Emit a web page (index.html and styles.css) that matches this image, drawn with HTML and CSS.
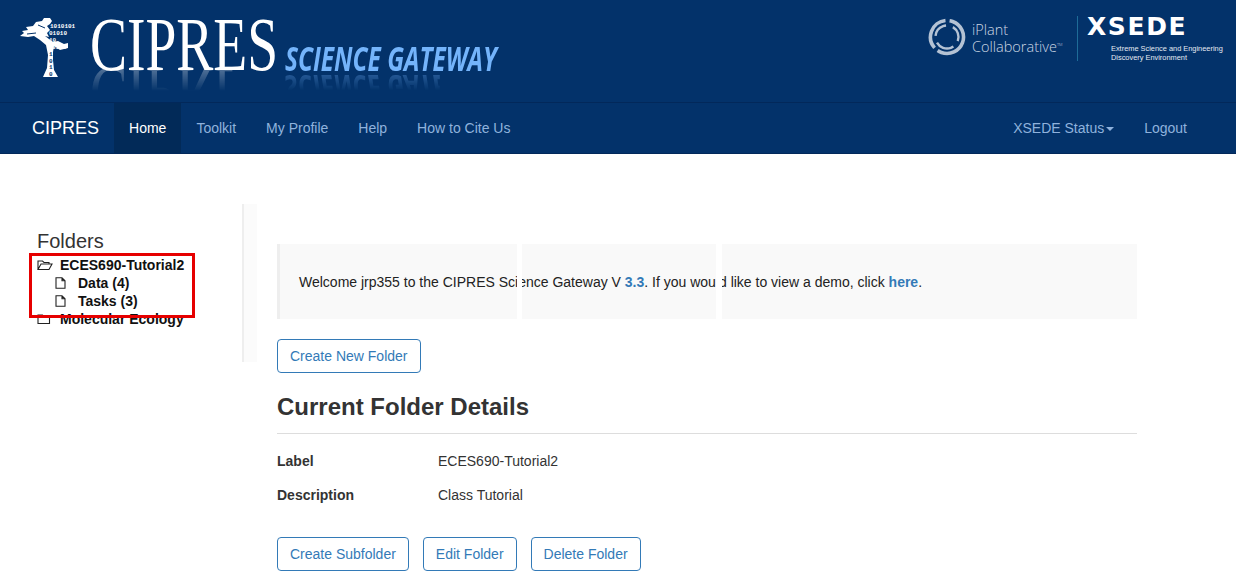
FILE: index.html
```html
<!DOCTYPE html>
<html lang="en">

<head>
  <meta charset="UTF-8">
  <title>CIPRES Science Gateway</title>
  <link rel="stylesheet" href="styles.css">
</head>

<body>

  <header class="banner">
    <div class="brand-logo">
      <svg class="tree" viewBox="18 16 62 64" width="62" height="64">
        <path fill="#fff" d="M20 36 L24 33 L22 31 L28 30 L26 27 L33 26 L36 22 L42 21 L44 18 L50 18 L52 21 L50 24 L47 26 L50 30 L47 33 L49 37 L45 36 L53 42 L58 41 L64 44 L68 43 L68 48 L60 50 L54 46 L53 52 L53 60 L54 70 L58 77 L43 77 L47 68 L48 55 L46 45 L40 40 L34 36 L28 37 Z" />
        <path stroke="#03326a" stroke-width="1" fill="none" d="M27 34 L36 33 M38 25 L45 28" />
        <g class="tree-bits">
          <text x="50" y="28">1010101</text>
          <text x="49" y="35">01010</text>
          <text x="49" y="42">10</text>
          <text x="52" y="49">0101</text>
        </g>
        <g class="tree-bits tree-bits-dark">
          <text x="49" y="56">1</text>
          <text x="49" y="63">0</text>
          <text x="49" y="69">1</text>
          <text x="49" y="76">0</text>
        </g>
      </svg>
      <span class="logo-word">CIPRES</span>
      <span class="logo-sub">SCIENCE GATEWAY</span>
    </div>

    <div class="partners">
      <svg class="iplant-mark" viewBox="0 0 40 40" width="40" height="40">
        <g fill="none" stroke="#b4c2d4">
          <circle cx="20" cy="20" r="16.5" stroke-width="3.6" stroke-dasharray="30 4 36 4" transform="rotate(20 20 20)" />
          <circle cx="20" cy="20" r="11.5" stroke-width="2.4" stroke-dasharray="16 7 16 7 16 7" transform="rotate(70 20 20)" />
        </g>
      </svg>
      <div class="iplant-name">iPlant<br>Collaborative<sup>TM</sup></div>
      <div class="partner-line"></div>
      <div class="xsede">
        <div class="xsede-name">XSEDE</div>
        <div class="xsede-sub">Extreme Science and Engineering<br>Discovery Environment</div>
      </div>
    </div>
  </header>

  <nav class="navbar">
    <a class="nav-brand" href="#">CIPRES</a>
    <a class="nav-link active" href="#">Home</a>
    <a class="nav-link" href="#">Toolkit</a>
    <a class="nav-link" href="#">My Profile</a>
    <a class="nav-link" href="#">Help</a>
    <a class="nav-link" href="#">How to Cite Us</a>
    <div class="nav-right">
      <a class="nav-link" href="#">XSEDE Status<span class="caret"></span></a>
      <a class="nav-link" href="#">Logout</a>
    </div>
  </nav>

  <div class="content">
    <aside class="sidebar">
      <h3>Folders</h3>
      <ul class="tree-list">
        <li>
          <svg class="icon" viewBox="0 0 16 12" width="16" height="12">
            <path d="M1 10.5 V2 H5.5 L7 3.5 H12 V5 M1 10.5 L4 5 H15 L12 10.5 Z" />
          </svg>
          ECES690-Tutorial2
        </li>
        <li class="child">
          <svg class="icon" viewBox="0 0 11 12" width="11" height="12">
            <path d="M1 .8 H7 L10 3.8 V11.2 H1 Z M7 .8 V3.8 H10" />
          </svg>
          Data (4)
        </li>
        <li class="child">
          <svg class="icon" viewBox="0 0 11 12" width="11" height="12">
            <path d="M1 .8 H7 L10 3.8 V11.2 H1 Z M7 .8 V3.8 H10" />
          </svg>
          Tasks (3)
        </li>
        <li>
          <svg class="icon" viewBox="0 0 16 12" width="16" height="12">
            <path d="M1 10.5 V2 H5.5 L7 3.5 H12.5 V10.5 Z" />
          </svg>
          Molecular Ecology
        </li>
      </ul>
      <div class="highlight"></div>
    </aside>

    <div class="rule"></div>

    <main class="main">
      <div class="welcome">
        <p>Welcome jrp355 to the CIPRES Science Gateway V <a href="#">3.3</a>. If you would like to view a demo, click <a href="#">here</a>.</p>
        <span class="gap gap-one"></span>
        <span class="gap gap-two"></span>
      </div>

      <button class="btn">Create New Folder</button>

      <h2>Current Folder Details</h2>

      <dl class="details">
        <dt>Label</dt>
        <dd>ECES690-Tutorial2</dd>
        <dt>Description</dt>
        <dd>Class Tutorial</dd>
      </dl>

      <div class="actions">
        <button class="btn">Create Subfolder</button>
        <button class="btn">Edit Folder</button>
        <button class="btn">Delete Folder</button>
      </div>
    </main>
  </div>

</body>

</html>
```

FILE: styles.css
```css
html, body {
  height: 100%;
  overflow: hidden;
}

body {
  margin: 0;
  font-family: "Liberation Sans", Arial, sans-serif;
  font-size: 14px;
  color: #333;
  background-color: #fff;
}

a {
  text-decoration: none;
}

/* top banner */
.banner {
  display: flex;
  justify-content: space-between;
  height: 102px;
  background-color: #03326a;
}

.brand-logo {
  display: flex;
  align-items: flex-start;
  padding: 16px 0 0 18px;
}

.tree-bits {
  font-family: "Liberation Mono", monospace;
  font-size: 6px;
  font-weight: bold;
  fill: #fff;
}

.tree-bits-dark {
  fill: #03326a;
}

.logo-word {
  width: 195px;
  height: 56px;
  margin-left: 10px;
  font-family: "Liberation Serif", serif;
  font-size: 76px;
  line-height: 56px;
  color: #fff;
  white-space: nowrap;
  transform: scaleX(.73);
  transform-origin: left top;
  -webkit-box-reflect: below -6px linear-gradient(transparent 55%, rgba(255, 255, 255, .35));
}

.logo-sub {
  width: 215px;
  height: 31px;
  margin-top: 27px;
  font-family: "Open Sans", sans-serif;
  font-size: 34px;
  font-weight: 700;
  font-style: italic;
  line-height: 31px;
  color: #74b4fb;
  white-space: nowrap;
  transform: scaleX(.72);
  transform-origin: left top;
  -webkit-box-reflect: below -2px linear-gradient(transparent 40%, rgba(255, 255, 255, .35));
}

.partners {
  display: flex;
  align-items: flex-start;
  padding: 16px 22px 0 0;
}

.iplant-mark {
  margin: 1px 5px 0 0;
}

.iplant-name {
  width: 105px;
  padding-top: 6px;
  font-family: "Open Sans", sans-serif;
  font-size: 14.5px;
  font-weight: 300;
  line-height: 15px;
  color: #ccd6e3;
}

.iplant-name sup {
  font-size: 4px;
  vertical-align: 6px;
}

.partner-line {
  width: 1px;
  height: 45px;
  background-color: #1e6c98;
}

.xsede {
  width: 127px;
  margin-left: 9px;
}

.xsede-name {
  font-family: "DejaVu Sans", sans-serif;
  font-size: 25px;
  font-weight: bold;
  line-height: 22px;
  letter-spacing: 1.6px;
  color: #fff;
}

.xsede-sub {
  margin: 6px 0 0 24px;
  font-size: 7.4px;
  line-height: 9px;
  color: #e4eaf2;
  white-space: nowrap;
}

/* nav */
.navbar {
  display: flex;
  height: 50px;
  padding-left: 17px;
  background-color: #03326a;
  border-top: 1px solid #02285a;
  border-bottom: 1px solid #02285a;
}

.nav-brand {
  padding: 0 15px;
  font-size: 18px;
  line-height: 50px;
  color: #fff;
}

.nav-link {
  padding: 0 15px;
  line-height: 50px;
  color: #8fb2dd;
}

.nav-link.active {
  background-color: #022a58;
  color: #fff;
}

.nav-right {
  display: flex;
  margin-left: auto;
  padding-right: 34px;
}

.caret {
  display: inline-block;
  margin-left: 2px;
  vertical-align: middle;
  border-top: 4px solid;
  border-left: 4px solid transparent;
  border-right: 4px solid transparent;
}

/* page */
.content {
  display: flex;
  align-items: flex-start;
  padding-top: 50px;
}

.sidebar {
  position: relative;
  box-sizing: border-box;
  width: 242px;
  padding: 26px 0 0 37px;
}

.sidebar h3 {
  margin: 0 0 4px;
  font-size: 20px;
  font-weight: normal;
  line-height: 22px;
}

.tree-list {
  margin: 0;
  padding: 0;
  list-style: none;
  color: #111;
  font-weight: bold;
  line-height: 18px;
}

.tree-list li {
  display: flex;
  align-items: center;
  padding-left: 23px;
}

.tree-list li.child {
  padding-left: 41px;
}

.icon {
  flex: none;
  margin-left: -23px;
  margin-right: 7px;
  fill: none;
  stroke: #222;
  stroke-width: 1.1;
}

.child .icon {
  margin-left: -23px;
  margin-right: 12px;
}

.highlight {
  position: absolute;
  left: 29px;
  top: 49px;
  width: 160px;
  height: 59px;
  border: 3px solid #e60000;
}

.rule {
  flex: none;
  box-sizing: border-box;
  width: 15px;
  height: 158px;
  background-color: #fbfbfb;
  border-left: 2px solid #eee;
}

.main {
  flex: none;
  width: 860px;
  margin-left: 20px;
  padding-top: 40px;
}

.welcome {
  position: relative;
  box-sizing: border-box;
  height: 75px;
  margin-bottom: 20px;
  padding: 0 19px;
  background-color: #f9f9f9;
  border-left: 3px solid #eee;
}

.welcome p {
  margin: 0;
  line-height: 76px;
  color: #222;
}

.welcome a {
  color: #337ab7;
  font-weight: bold;
}

.gap {
  position: absolute;
  top: 0;
  bottom: 0;
  background-color: #fff;
}

.gap-one {
  left: 237px;
  width: 5px;
}

.gap-two {
  left: 436px;
  width: 6px;
}

.btn {
  display: block;
  height: 34px;
  padding: 0 12px;
  font-family: inherit;
  font-size: 14px;
  color: #337ab7;
  background-color: #fff;
  border: 1px solid #337ab7;
  border-radius: 4px;
}

h2 {
  margin: 20px 0 0;
  padding-bottom: 13px;
  font-size: 24px;
  font-weight: bold;
  line-height: 27px;
  border-bottom: 1px solid #ddd;
}

.details {
  display: grid;
  grid-template-columns: 161px 1fr;
  row-gap: 14px;
  margin: 17px 0 0;
  line-height: 20px;
}

.details dt {
  font-weight: bold;
}

.details dd {
  margin: 0;
}

.actions {
  display: flex;
  gap: 14px;
  margin-top: 32px;
}
```
